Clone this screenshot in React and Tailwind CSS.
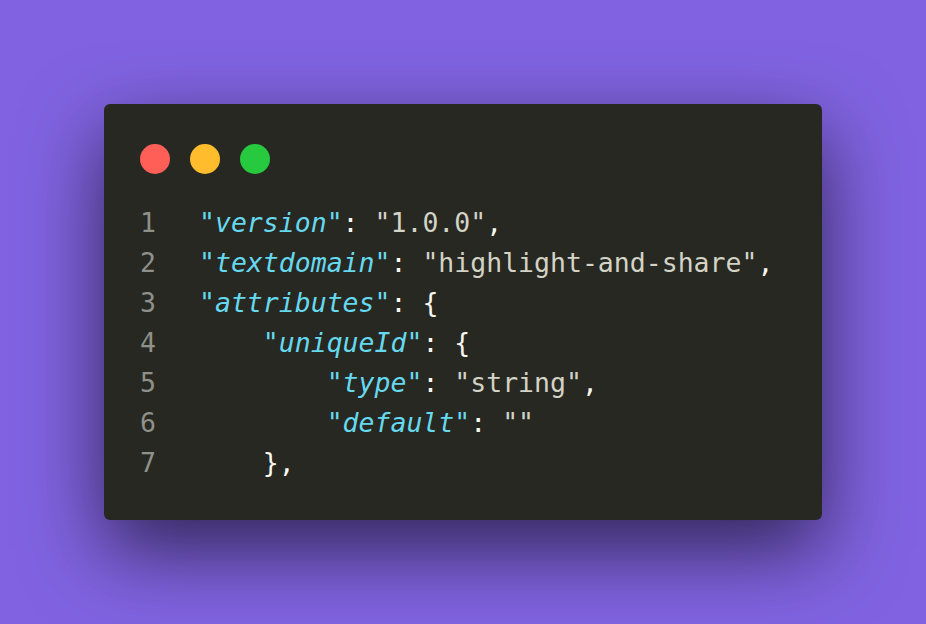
import React from "react";

const K = ({ children }) => (
  <span className="italic text-[#66d9ef]">{children}</span>
);
const S = ({ children }) => <span className="text-[#d3d3c6]">{children}</span>;
const P = ({ children }) => <span className="text-[#f8f8f2]">{children}</span>;

const lines = [
  <>
    <K>"version"</K>
    <P>: </P>
    <S>"1.0.0"</S>
    <P>,</P>
  </>,
  <>
    <K>"textdomain"</K>
    <P>: </P>
    <S>"highlight-and-share"</S>
    <P>,</P>
  </>,
  <>
    <K>"attributes"</K>
    <P>: {"{"}</P>
  </>,
  <>
    {"    "}
    <K>"uniqueId"</K>
    <P>: {"{"}</P>
  </>,
  <>
    {"        "}
    <K>"type"</K>
    <P>: </P>
    <S>"string"</S>
    <P>,</P>
  </>,
  <>
    {"        "}
    <K>"default"</K>
    <P>: </P>
    <S>""</S>
  </>,
  <>
    {"    "}
    <P>{"},"}</P>
  </>,
];

export default function App() {
  return (
    <div className="w-[926px] h-[624px] bg-[#8163e1] p-[104px] overflow-hidden">
      <div className="w-[718px] h-[416px] bg-[#272822] rounded-[6px] shadow-[0_30px_80px_rgba(0,0,0,0.62)] pt-[40px] pl-[36px]">
        <div className="flex gap-[20px]">
          <div className="w-[30px] h-[30px] rounded-full bg-[#ff5f56]" />
          <div className="w-[30px] h-[30px] rounded-full bg-[#ffbd2e]" />
          <div className="w-[30px] h-[30px] rounded-full bg-[#27c93f]" />
        </div>
        <div
          className="mt-[29px] text-[26.5px] leading-[40px] whitespace-pre"
          style={{ fontFamily: '"DejaVu Sans Mono", "Liberation Mono", monospace' }}
        >
          {lines.map((l, i) => (
            <div key={i} className="flex">
              <span className="w-[59px] text-[#8f908a]">{i + 1}</span>
              <span>{l}</span>
            </div>
          ))}
        </div>
      </div>
    </div>
  );
}
